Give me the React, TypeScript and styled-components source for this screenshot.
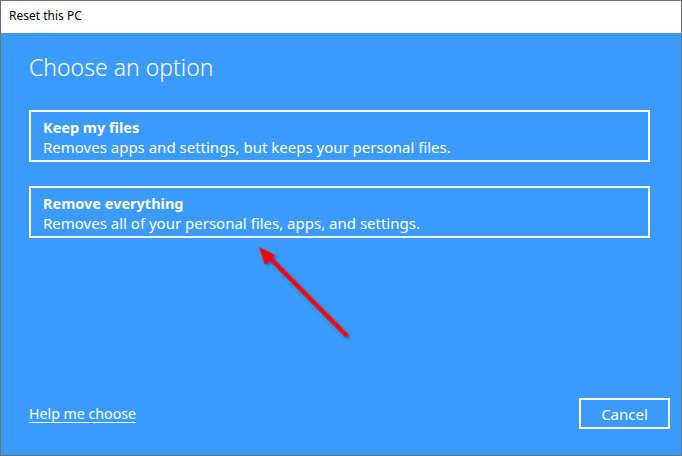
import { createGlobalStyle, styled } from 'styled-components'

const GlobalStyle = createGlobalStyle`
	html, body {
		margin: 0;
		padding: 0;
		width: 682px;
		height: 456px;
		overflow: hidden;
	}
	body {
		font-family: 'Noto Sans', 'Open Sans', sans-serif;
	}
`

const options = [
	{ title: 'Keep my files', text: 'Removes apps and settings, but keeps your personal files.' },
	{ title: 'Remove everything', text: 'Removes all of your personal files, apps, and settings.' },
]

const App = () => {
	return (
		<>
			<GlobalStyle />
			<Window>
				<TitleBar>Reset this PC</TitleBar>
				<Content>
					<Heading>Choose an option</Heading>
					<OptionList>
						{options.map((o) => (
							<OptionButton key={o.title}>
								<OptionTitle>{o.title}</OptionTitle>
								<OptionText>{o.text}</OptionText>
							</OptionButton>
						))}
					</OptionList>
					<Footer>
						<HelpLink href="#">Help me choose</HelpLink>
						<CancelButton>Cancel</CancelButton>
					</Footer>
					<Arrow width="100" height="100" viewBox="0 0 100 100">
						<defs>
							<filter id="shadow" x="-20%" y="-20%" width="140%" height="140%">
								<feDropShadow dx="2" dy="2" stdDeviation="1.5" floodColor="#000" floodOpacity="0.35" />
							</filter>
						</defs>
						<g filter="url(#shadow)">
							<line x1="91" y1="90" x2="12" y2="10" stroke="#ff0000" strokeWidth="4" />
							<polygon points="3,1 19,9 9,19" fill="#ff0000" />
						</g>
					</Arrow>
				</Content>
			</Window>
		</>
	)
}

const Window = styled.div`
	box-sizing: border-box;
	width: 682px;
	height: 456px;
	border: 1px solid #707070;
	display: flex;
	flex-direction: column;
	background: #3a9bfd;
`
const TitleBar = styled.div`
	flex: 0 0 30px;
	background: #ffffff;
	color: #000;
	font-size: 12px;
	line-height: 30px;
	padding-left: 8px;
	padding-bottom: 2px;
	box-sizing: border-box;
`
const Content = styled.div`
	position: relative;
	flex: 1 1 auto;
	display: flex;
	flex-direction: column;
	padding: 0 31px 26px 28px;
	color: #fff;
`
const Heading = styled.h1`
	margin: 16px 0 0 0;
	font-size: 23px;
	font-weight: 300;
	line-height: 36px;
`
const OptionList = styled.div`
	margin-top: 25px;
	display: flex;
	flex-direction: column;
	gap: 24px;
`
const OptionButton = styled.div`
	box-sizing: border-box;
	height: 52px;
	border: 2px solid #fff;
	padding: 5px 12px 0;
	display: flex;
	flex-direction: column;
`
const OptionTitle = styled.div`
	font-size: 14.5px;
	font-weight: 700;
	line-height: 20px;
`
const OptionText = styled.div`
	font-size: 15px;
	line-height: 20px;
`
const Footer = styled.div`
	margin-top: auto;
	margin-right: -20px;
	display: flex;
	align-items: center;
	justify-content: space-between;
`
const HelpLink = styled.a`
	color: #fff;
	font-size: 14.2px;
	text-decoration: underline;
	text-underline-offset: 3px;
	text-decoration-thickness: 1px;
`
const CancelButton = styled.button`
	box-sizing: border-box;
	width: 91px;
	height: 31px;
	border: 2px solid #fff;
	background: transparent;
	color: #fff;
	font-family: inherit;
	font-size: 15px;
	padding: 0;
`
const Arrow = styled.svg`
	position: absolute;
	left: 255px;
	top: 213px;
	pointer-events: none;
`

export default App
